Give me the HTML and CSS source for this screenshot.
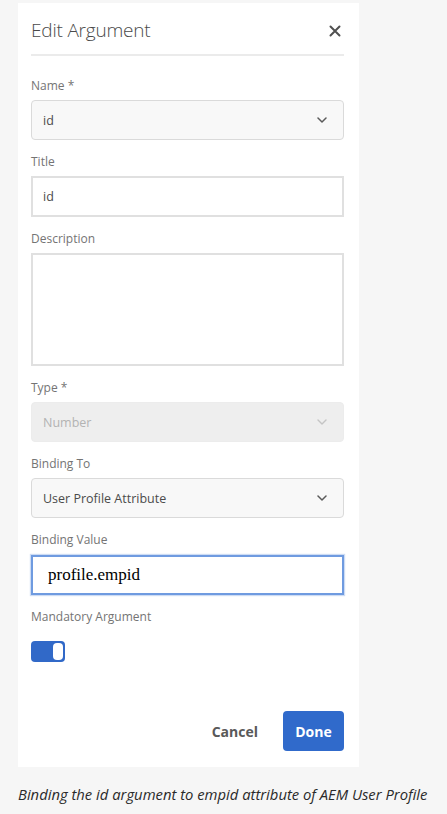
FILE: index.html
```html
<!DOCTYPE html>
<html>
<head>
<meta charset="utf-8">
<link rel="stylesheet" href="styles.css">
</head>
<body>
<div class="panel">
  <div class="header">
    <h1 class="title">Edit Argument</h1>
    <svg class="close" width="12" height="12" viewBox="0 0 12 12"><path d="M1.5 1.5 L10.5 10.5 M10.5 1.5 L1.5 10.5" stroke="#505050" stroke-width="2" stroke-linecap="round"/></svg>
  </div>
  <div class="divider"></div>

  <div class="group">
    <div class="label">Name *</div>
    <div class="select"><span>id</span><svg class="chev" width="10" height="6" viewBox="0 0 10 6"><path d="M1 1 L5 5 L9 1" fill="none" stroke="#5a5a5a" stroke-width="1.5" stroke-linecap="round" stroke-linejoin="round"/></svg></div>
  </div>
  <div class="group">
    <div class="label">Title</div>
    <div class="input"><span>id</span></div>
  </div>
  <div class="group">
    <div class="label">Description</div>
    <div class="textarea"></div>
  </div>
  <div class="group">
    <div class="label">Type *</div>
    <div class="select disabled"><span>Number</span><svg class="chev" width="10" height="6" viewBox="0 0 10 6"><path d="M1 1 L5 5 L9 1" fill="none" stroke="#c4c4c4" stroke-width="1.4" stroke-linecap="round" stroke-linejoin="round"/></svg></div>
  </div>
  <div class="group">
    <div class="label">Binding To</div>
    <div class="select"><span>User Profile Attribute</span><svg class="chev" width="10" height="6" viewBox="0 0 10 6"><path d="M1 1 L5 5 L9 1" fill="none" stroke="#5a5a5a" stroke-width="1.5" stroke-linecap="round" stroke-linejoin="round"/></svg></div>
  </div>
  <div class="group">
    <div class="label">Binding Value</div>
    <div class="input focus"><span class="serif">profile.empid</span></div>
  </div>
  <div class="group last">
    <div class="label">Mandatory Argument</div>
    <div class="toggle"><div class="knob"></div></div>
  </div>

  <div class="actions">
    <span class="cancel">Cancel</span>
    <span class="done">Done</span>
  </div>
</div>
<p class="caption">Binding the id argument to empid attribute of AEM User Profile</p>
</body>
</html>
```

FILE: styles.css
```css
html, body {
  margin: 0;
  padding: 0;
  background: #f6f6f6;
}
body {
  font-family: "Open Sans", "Noto Sans", sans-serif;
  color: #4b4b4b;
}
.panel {
  margin: 3px 0 0 18px;
  width: 341px;
  box-sizing: border-box;
  background: #ffffff;
  padding: 13px 15px 16px 13px;
}
.header {
  display: flex;
  align-items: center;
  justify-content: space-between;
  height: 28px;
}
.title {
  margin: 0;
  font-size: 19px;
  font-weight: 300;
  line-height: 28px;
  color: #4a4a4a;
  letter-spacing: -0.2px;
}
.close {
  margin-right: 3px;
  margin-top: 2px;
}
.divider {
  margin-top: 10px;
  height: 2px;
  background: #ebebeb;
  margin-bottom: 22px;
}
.group {
  display: flex;
  flex-direction: column;
  margin-bottom: 14px;
}
.group.last {
  margin-bottom: 0;
}
.label {
  font-size: 12px;
  line-height: 16px;
  color: #747474;
  margin-bottom: 6px;
}
.select {
  height: 40px;
  box-sizing: border-box;
  border: 1px solid #dadada;
  border-radius: 4px;
  background: #f8f8f8;
  display: flex;
  align-items: center;
  justify-content: space-between;
  padding: 0 16px 0 11px;
  font-size: 12.5px;
  color: #4b4b4b;
}
.select.disabled {
  background: #eeeeee;
  border-color: #ececec;
  color: #b3b3b3;
}
.input {
  height: 41px;
  box-sizing: border-box;
  border: 2px solid #e0e0e0;
  background: #fff;
  display: flex;
  align-items: center;
  padding: 0 10px;
  font-size: 12.5px;
}
.input.focus {
  height: 40px;
  margin-top: 1px;
  border: 2px solid #6f9be0;
  box-shadow: 0 0 1px 1px rgba(111, 155, 224, 0.35);
  padding-left: 15px;
}
.serif {
  font-family: "Liberation Serif", serif;
  font-size: 17px;
  color: #000;
}
.textarea {
  height: 113px;
  box-sizing: border-box;
  border: 2px solid #e0e0e0;
  background: #fff;
}
.toggle {
  margin-top: 10px;
  width: 34px;
  height: 21px;
  box-sizing: border-box;
  background: #3169c8;
  border-radius: 4px;
  display: flex;
  justify-content: flex-end;
  align-items: center;
  padding-right: 2px;
}
.knob {
  width: 10px;
  height: 17px;
  background: #fff;
  border-radius: 4px;
}
.actions {
  margin-top: 49px;
  display: flex;
  justify-content: flex-end;
  align-items: center;
  gap: 25px;
}
.cancel {
  font-size: 14px;
  font-weight: 700;
  color: #595959;
}
.done {
  width: 61px;
  height: 40px;
  box-sizing: border-box;
  background: #306acb;
  border-radius: 4px;
  color: #fff;
  font-size: 14px;
  font-weight: 700;
  display: flex;
  align-items: center;
  justify-content: center;
}
.caption {
  margin: 17px 0 0 18px;
  font-size: 14.8px;
  line-height: 20px;
  font-style: italic;
  color: #2a2a2a;
}
```
